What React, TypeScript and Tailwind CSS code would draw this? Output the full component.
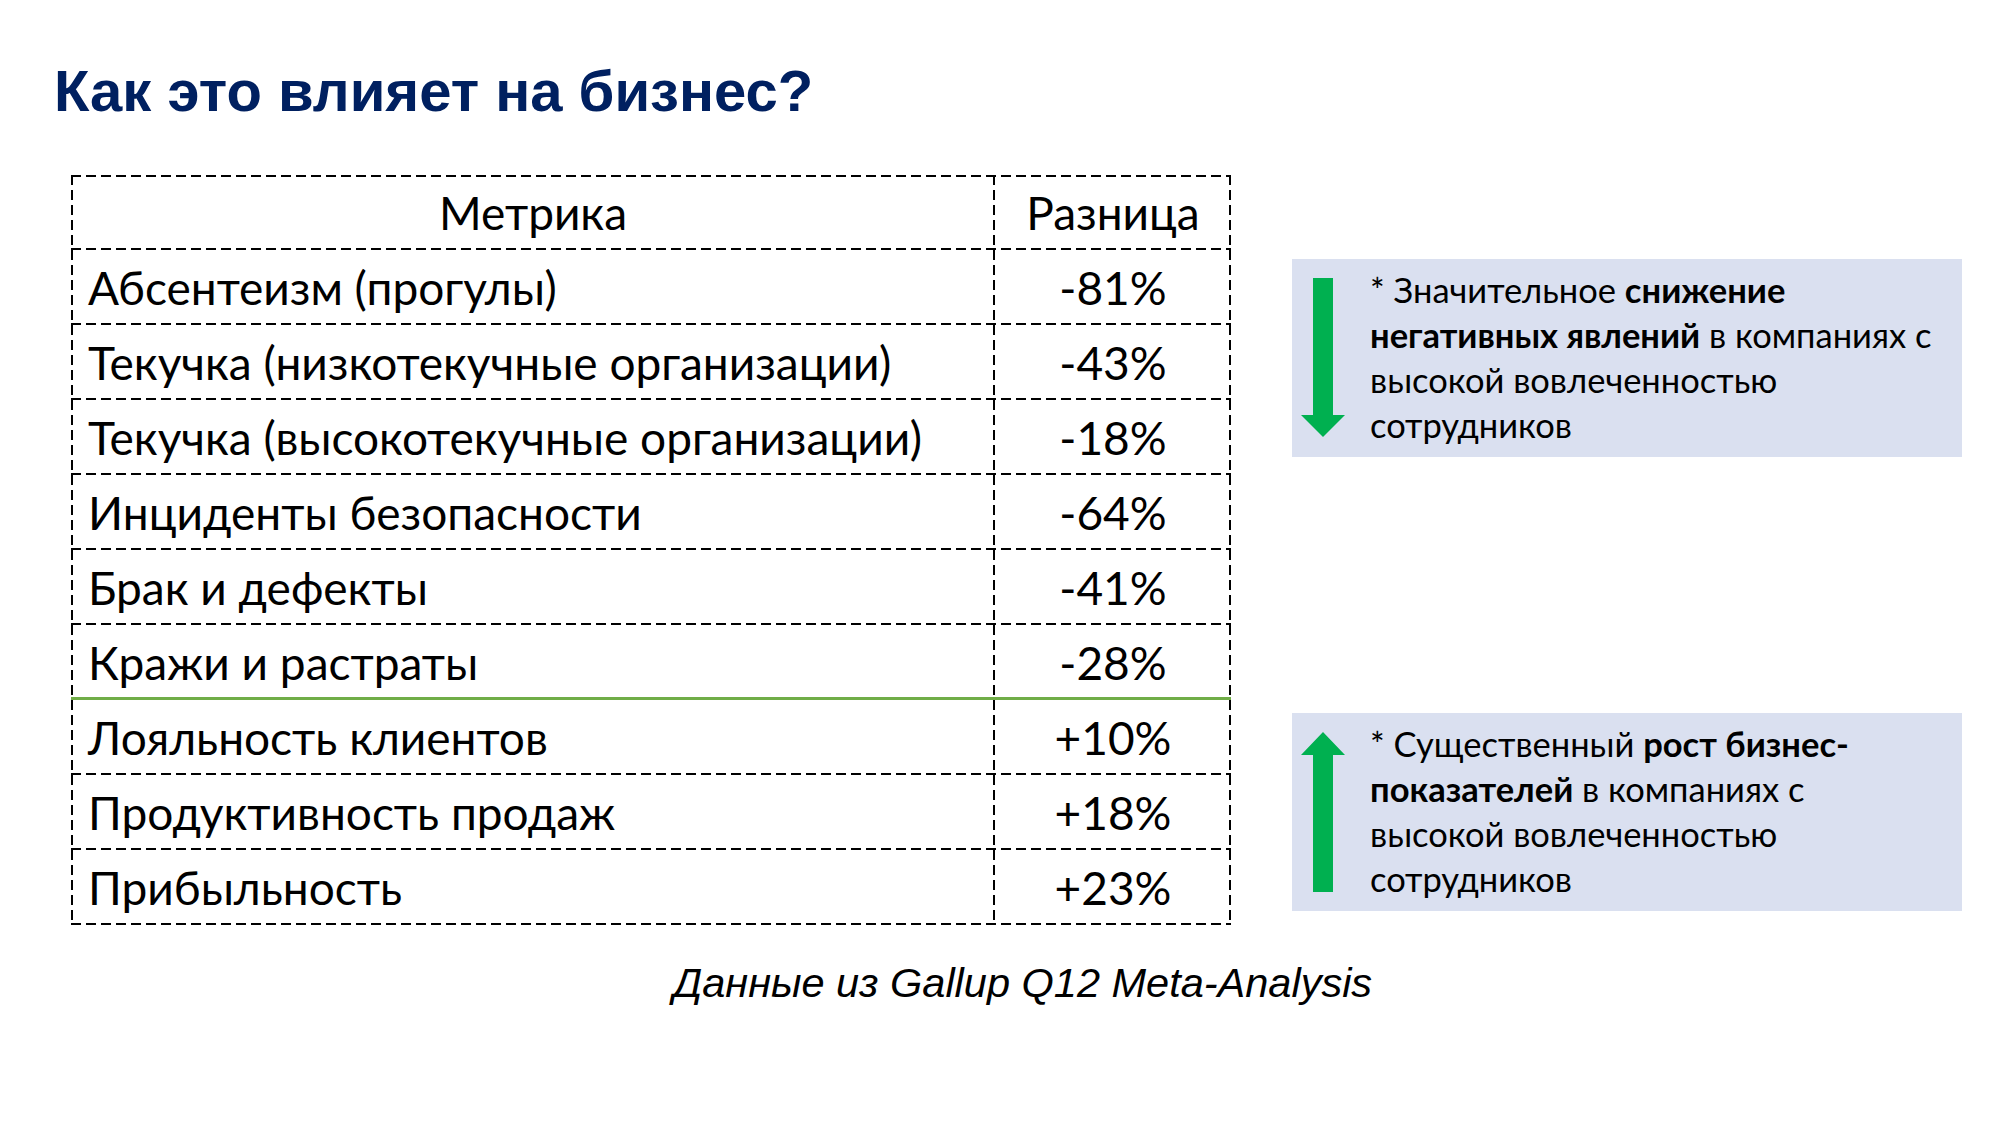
import React from "react";

const rows: { label: string; value: string }[] = [
  { label: "Абсентеизм (прогулы)", value: "-81%" },
  { label: "Текучка (низкотекучные организации)", value: "-43%" },
  { label: "Текучка (высокотекучные организации)", value: "-18%" },
  { label: "Инциденты безопасности", value: "-64%" },
  { label: "Брак и дефекты", value: "-41%" },
  { label: "Кражи и растраты", value: "-28%" },
  { label: "Лояльность клиентов", value: "+10%" },
  { label: "Продуктивность продаж", value: "+18%" },
  { label: "Прибыльность", value: "+23%" },
];

// dashed lines drawn with gradients so the dash length matches the slide (10px dash, 5px gap)
const tableFrame =
  "[background-image:linear-gradient(to_right,#000_10px,transparent_10px),linear-gradient(to_right,#000_10px,transparent_10px),linear-gradient(to_bottom,#000_10px,transparent_10px),linear-gradient(to_bottom,#000_10px,transparent_10px)] [background-size:15px_2px,15px_2px,2px_15px,2px_15px] [background-position:left_top,left_bottom,left_top,right_top] [background-repeat:repeat-x,repeat-x,repeat-y,repeat-y]";
const rowDashed =
  "[background-image:linear-gradient(to_right,#000_10px,transparent_10px)] [background-size:15px_2px] [background-position:left_bottom] [background-repeat:repeat-x]";
const rowGreen =
  "[background-image:linear-gradient(#70ad47,#70ad47)] [background-size:100%_3px] [background-position:left_bottom] [background-repeat:no-repeat]";
const cellRight =
  "[background-image:linear-gradient(to_bottom,#000_10px,transparent_10px)] [background-size:2px_15px] [background-position:right_top] [background-repeat:repeat-y]";

function ArrowDown() {
  return (
    <svg width="44" height="159" viewBox="0 0 44 159" className="shrink-0">
      <path d="M12 0 H32 V137 H44 L22 159 L0 137 H12 Z" fill="#00b050" />
    </svg>
  );
}

function ArrowUp() {
  return (
    <svg width="44" height="160" viewBox="0 0 44 160" className="shrink-0">
      <path d="M22 0 L44 23 H32 V160 H12 V23 H0 Z" fill="#00b050" />
    </svg>
  );
}

function NoteBox({ up, children }: { up?: boolean; children: React.ReactNode }) {
  return (
    <div className="w-[670px] h-[198px] bg-[#dae0f0] flex items-start pl-[9px] pt-[19px]">
      {up ? <ArrowUp /> : <ArrowDown />}
      <div className="ml-[25px] -mt-[11px] text-[34.5px] leading-[45px] text-black font-['Lato','Open_Sans',sans-serif]">
        {children}
      </div>
    </div>
  );
}

export default function App() {
  return (
    <div className="w-[2000px] h-[1125px] bg-white overflow-hidden">
      {/* Title */}
      <h1 className="pl-[54px] pt-[62px] text-[58px] leading-none font-bold text-[#002060] font-['Liberation_Sans',Arial,sans-serif]">
        Как это влияет на бизнес?
      </h1>

      <div className="flex mt-[55px] ml-[71px]">
        {/* Table */}
        <div className={"w-[1160px] font-['Lato','Open_Sans',sans-serif] text-black text-[46px] " + tableFrame}>
          <div className={"grid grid-cols-[924px_236px] h-[75px] " + rowDashed}>
            <div className={"flex items-center justify-center " + cellRight}>Метрика</div>
            <div className="flex items-center justify-center">Разница</div>
          </div>
          {rows.map((r, i) => (
            <div
              key={r.label}
              className={
                "grid grid-cols-[924px_236px] h-[75px] " +
                (i === rows.length - 1 ? "" : i === 5 ? rowGreen : rowDashed)
              }
            >
              <div className={"flex items-center pl-[17px] " + cellRight}>{r.label}</div>
              <div className="flex items-center justify-center">{r.value}</div>
            </div>
          ))}
        </div>

        {/* Notes */}
        <div className="ml-[61px] flex flex-col">
          <div className="mt-[84px]">
            <NoteBox>
              * Значительное <b>снижение</b>
              <br />
              <b>негативных явлений</b> в компаниях с
              <br />
              высокой вовлеченностью
              <br />
              сотрудников
            </NoteBox>
          </div>
          <div className="mt-[256px]">
            <NoteBox up>
              * Существенный <b>рост бизнес-</b>
              <br />
              <b>показателей</b> в компаниях с
              <br />
              высокой вовлеченностью
              <br />
              сотрудников
            </NoteBox>
          </div>
        </div>
      </div>

      {/* Source */}
      <p className="ml-[673px] mt-[34px] text-[41.5px] leading-[48px] italic text-black font-['Liberation_Sans',Arial,sans-serif]">
        Данные из Gallup Q12 Meta-Analysis
      </p>
    </div>
  );
}
